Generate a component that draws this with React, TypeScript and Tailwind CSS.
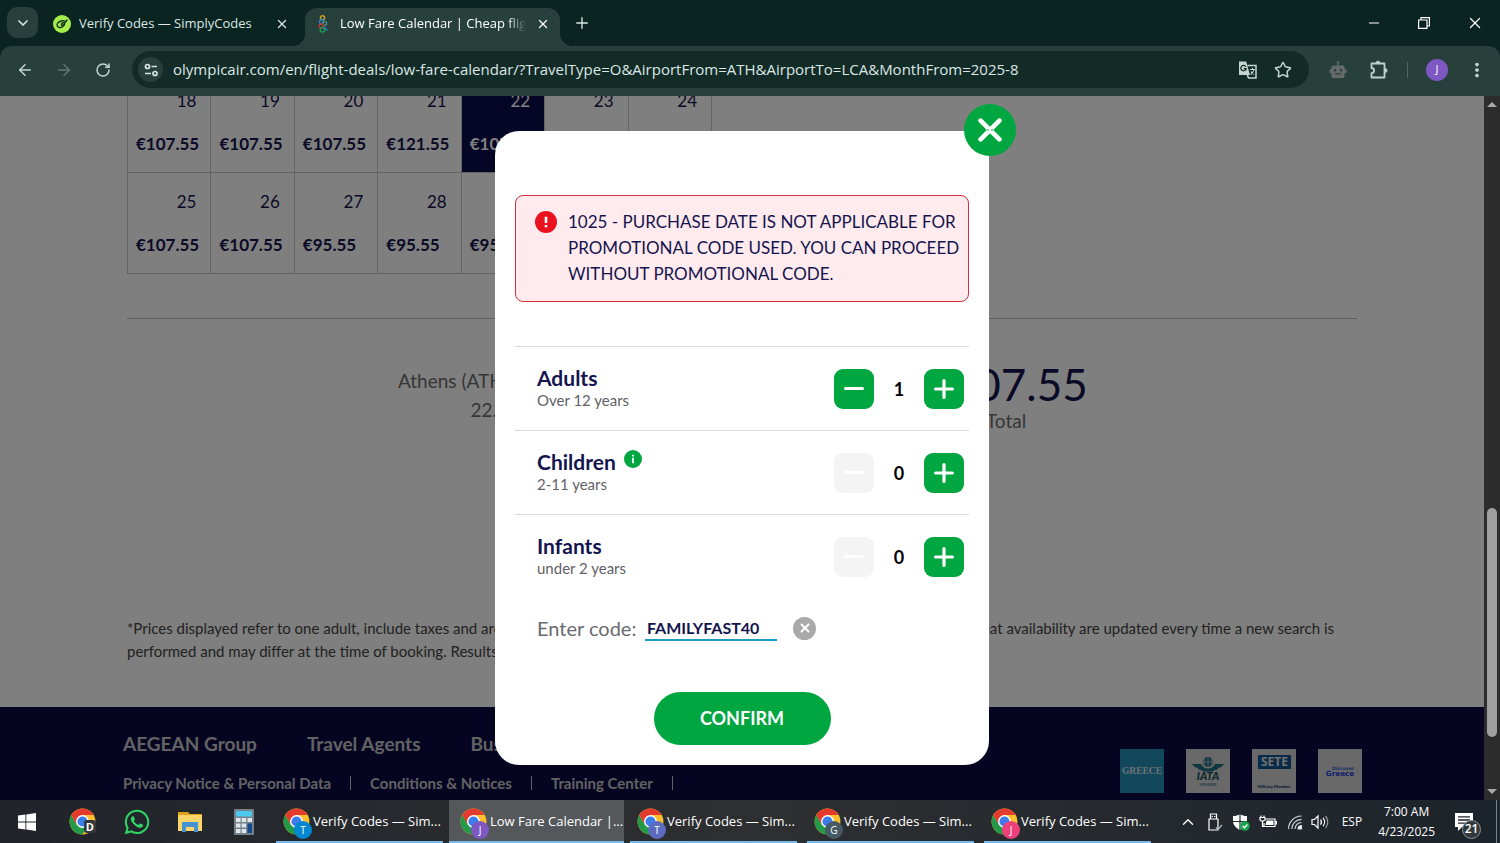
import React, { useState } from "react";
import {
  ArrowLeft,
  ArrowRight,
  ChevronDown,
  ChevronUp,
  Minus,
  Plus,
  RotateCw,
  Star,
  X,
} from "lucide-react";
import { FaWhatsapp } from "react-icons/fa";
import { MdMoreVert } from "react-icons/md";

const ui = "font-['Open_Sans','Noto_Sans',sans-serif]";
const site = "font-['Lato','Open_Sans',sans-serif]";

function SimplyCodesIcon() {
  return (
    <svg viewBox="0 0 18 18" className="size-[18px] shrink-0" aria-hidden="true">
      <circle cx="9" cy="9" r="9" fill="#a5ee4b" />
      <path
        d="M12 6.200C8.500 5 4.200 7 4 9.800c-.1 2.800 3.600 3.500 5.800 1.700 2.200-1.700 2.400-3.600 1-3.900-1.500-.2-3 1.300-2.300 2.300.7.700 2 .1 2.900-1.200L14 5"
        fill="none"
        stroke="#173321"
        strokeWidth="1.400"
        strokeLinecap="round"
      />
    </svg>
  );
}

function OlympicIcon() {
  return (
    <svg viewBox="0 0 14 18" className="h-[18px] w-[14px] shrink-0" fill="none" strokeWidth="1.400" aria-hidden="true">
      <circle cx="6.500" cy="2.800" r="2.100" stroke="#c9a227" />
      <circle cx="5.500" cy="6.800" r="2.100" stroke="#2b7fc4" />
      <circle cx="8.500" cy="8.500" r="2.100" stroke="#4a8f8a" />
      <circle cx="5.500" cy="11" r="2.100" stroke="#c0392b" />
      <circle cx="6.500" cy="14.800" r="2.300" stroke="#1f9d55" />
      <path d="M8.500 12.500 11.500 15.500" stroke="#2b7fc4" />
    </svg>
  );
}

function TuneIcon() {
  return (
    <svg viewBox="0 0 16 16" className="size-4" fill="none" stroke="#d5e3df" strokeWidth="1.700" aria-hidden="true">
      <circle cx="4.500" cy="4.500" r="2" />
      <path d="M8.500 4.500H14M2 11.500h6" />
      <circle cx="12" cy="11.500" r="2" />
    </svg>
  );
}

function TranslateIcon() {
  return (
    <svg viewBox="0 0 20 20" className="size-5" fill="none" aria-hidden="true">
      <path d="M9.500 5.500H18V18h-7.500L9 14" stroke="#c5d6d1" strokeWidth="1.500" />
      <path d="M1 1.500h7.200L12 15H1z" fill="#c5d6d1" />
      <path d="M7.800 6.600A2.700 2.700 0 1 0 8.200 8.600H5.800" stroke="#122b27" strokeWidth="1.300" />
      <path d="M12 9.500h5M14.500 8v1.500M16 9.500c-.6 2.600-2 4.200-3.300 5M13.200 11.500c.8 1.500 1.800 2.500 3 3" stroke="#c5d6d1" strokeWidth="1.100" />
    </svg>
  );
}

function RobotIcon() {
  return (
    <svg viewBox="0 0 20 20" className="size-5" fill="#636a68" aria-hidden="true">
      <path d="M9.400 2.500h1.200V6H9.400z" />
      <circle cx="10" cy="2.500" r="1.200" />
      <path
        fillRule="evenodd"
        d="M5 5.500h10a1.500 1.500 0 0 1 1.500 1.500v2a2.200 2.200 0 0 1 0 4.600V17a1 1 0 0 1-1 1h-11a1 1 0 0 1-1-1v-3.400a2.200 2.200 0 0 1 0-4.600V7A1.500 1.500 0 0 1 5 5.500zM7 9a1.200 1.200 0 1 0 0 2.400A1.200 1.200 0 0 0 7 9zm6 0a1.200 1.200 0 1 0 0 2.400A1.200 1.200 0 0 0 13 9zM7 13.300v1.200h6v-1.200z"
      />
    </svg>
  );
}

function PuzzleIcon() {
  return (
    <svg viewBox="0 0 20 20" className="size-5" fill="none" aria-hidden="true">
      <path
        d="M2.500 3.500h13v14h-13v-4.300a2.600 2.600 0 0 0 0-5.200z"
        stroke="#b9d3cc"
        strokeWidth="1.800"
        strokeLinejoin="round"
      />
      <path d="M7 3.200a2 2 0 0 1 4 0zM16 8.500a2 2 0 0 1 0 4z" fill="#b9d3cc" stroke="#b9d3cc" />
    </svg>
  );
}

function RestoreIcon() {
  return (
    <svg viewBox="0 0 12 12" className="size-3" fill="none" stroke="#fff" strokeWidth="1.200" aria-hidden="true">
      <path d="M.6 3h8.400v8.400H.6zM3 3V.6h8.400V9H9" />
    </svg>
  );
}

function ChromeIcon() {
  return (
    <svg viewBox="0 0 48 48" className="size-[27px]" aria-hidden="true">
      <circle cx="24" cy="24" r="23" fill="#fbc02d" />
      <path d="M4.100 12.500A23 23 0 0 0 24 47l10-17.300L24 24 14 29.700z" fill="#229a48" />
      <path d="M4.100 12.500A23 23 0 0 1 43.900 12.500H24L14 29.700z" fill="#e33b2e" />
      <circle cx="24" cy="24" r="11.500" fill="#fff" />
      <circle cx="24" cy="24" r="9" fill="#3b7ded" />
    </svg>
  );
}

function WindowsIcon() {
  return (
    <svg viewBox="0 0 18 18" className="size-[18px]" fill="#fff" aria-hidden="true">
      <path d="M0 2.600 7.400 1.600V8.500H0zM8.300 1.500 18 0v8.500H8.300zM0 9.400h7.400v7L0 15.400zM8.300 9.400H18V18l-9.700-1.400z" />
    </svg>
  );
}

function FolderIcon() {
  return (
    <svg viewBox="0 0 26 22" className="h-[22px] w-[26px]" aria-hidden="true">
      <path d="M1 1h10l2 2h12v4H1z" fill="#e0a21b" />
      <path d="M1 4h24v16H1z" fill="#fbd56c" />
      <path d="M5 11h16v10h-4v-5H9v5H5z" fill="#4593d3" />
    </svg>
  );
}

function CalculatorIcon() {
  return (
    <svg viewBox="0 0 20 26" className="h-[26px] w-5" aria-hidden="true">
      <rect width="20" height="26" rx="1" fill="#75808b" />
      <rect x="2" y="2" width="16" height="5.500" fill="#4cc7ee" />
      <path d="M2 9h4.500v4H2zM7.700 9h4.500v4H7.700zM13.500 9H18v4h-4.500zM2 14.500h4.500v4H2zM7.700 14.500h4.500v4H7.700zM2 20h4.500v4H2zM7.700 20h4.500v4H7.700z" fill="#dfe6ec" />
      <path d="M13.500 14.500H18V24h-4.500z" fill="#14498c" />
    </svg>
  );
}

function UsbIcon() {
  return (
    <svg viewBox="0 0 16 18" className="h-[18px] w-4" fill="none" stroke="#fff" strokeWidth="1.200" aria-hidden="true">
      <path d="M3.500 6V1h6v5M2 6h9v11H2zM5.300 3v1M7.700 3v1" />
      <path d="M9 14.500l2 2 4-4.500" stroke="#b8bec2" />
    </svg>
  );
}

function ShieldIcon() {
  return (
    <svg viewBox="0 0 18 18" className="size-[18px]" aria-hidden="true">
      <path d="M8 1c2 1.500 4.500 2 7 2v5c0 4-3 7-7 9-4-2-7-5-7-9V3c2.500 0 5-.5 7-2z" fill="#fff" />
      <path d="M8 1v16M1 8.500h14" stroke="#20262b" strokeWidth="1.200" />
      <circle cx="13" cy="13" r="4.800" fill="#17a34a" />
      <path d="m10.700 13 1.700 1.700 3-3.200" fill="none" stroke="#fff" strokeWidth="1.300" />
    </svg>
  );
}

function BatteryIcon() {
  return (
    <svg viewBox="0 0 18 14" className="h-3.5 w-[18px]" fill="none" stroke="#fff" strokeWidth="1.200" aria-hidden="true">
      <path d="M6.500 4H16v7.500H5V8M16 6.500h1.400V9H16" />
      <path d="M7.500 5.500H14.500v4.500h-8z" fill="#fff" stroke="none" />
      <path d="M1 2.500h5V5L3.500 6.500 1 5zM2 .5v2M5 .5v2M3.500 6v5.500H5" />
    </svg>
  );
}

function WifiIcon() {
  return (
    <svg viewBox="0 0 16 16" className="size-4" fill="none" stroke="#cfd4d7" strokeWidth="1.200" aria-hidden="true">
      <path d="M1.500 15A13 13 0 0 1 14.500 2M4.800 15a9.700 9.700 0 0 1 9.700-9.700M8 15a6.500 6.500 0 0 1 6.500-6.500" />
      <path d="M11 15a3.500 3.500 0 0 1 3.500-3.500V15z" fill="#fff" />
    </svg>
  );
}

function SpeakerIcon() {
  return (
    <svg viewBox="0 0 18 16" className="h-4 w-[18px]" fill="none" stroke="#fff" strokeWidth="1.200" aria-hidden="true">
      <path d="M1 5.500h2.500L7 2v12l-3.500-3.500H1z" />
      <path d="M9.500 5.500a4 4 0 0 1 0 5M12 3.800a6.500 6.500 0 0 1 0 8.400" />
      <path d="M14.500 2a9 9 0 0 1 0 12" stroke="#99a0a4" />
    </svg>
  );
}

function NotificationIcon() {
  return (
    <svg viewBox="0 0 18 18" className="size-[18px]" aria-hidden="true">
      <path d="M0 0h18v14H7l-4 4v-4H0z" fill="#fff" />
      <path d="M3 3.800h12M3 7h12M3 10.200h8" stroke="#20262b" strokeWidth="1.300" />
    </svg>
  );
}

function TabStrip() {
  return (
    <div className="flex h-[46px] items-end bg-[#0a2421] pl-[7px] text-[#dce7e4]">
      <button aria-label="Search tabs" className="mb-2 flex size-[31px] items-center justify-center rounded-[10px] bg-[#28403b]">
        <ChevronDown className="size-4" strokeWidth={2.5} />
      </button>
      <div className="flex h-[38px] w-[267px] items-center pb-[7px] pl-[15px]">
        <SimplyCodesIcon />
        <span className="ml-2 flex-1 truncate text-[13px]">Verify Codes — SimplyCodes</span>
        <button aria-label="Close tab" className="mr-4">
          <X className="size-3.5" strokeWidth={2.2} />
        </button>
      </div>
      <div className="relative flex h-[38px] w-[255px] items-center rounded-t-xl bg-[#28403b] pb-[7px] pl-[11px]">
        <span className="absolute bottom-0 -left-3 size-3 bg-[radial-gradient(circle_at_0_0,transparent_12px,#28403b_12px)]" />
        <span className="absolute -right-3 bottom-0 size-3 bg-[radial-gradient(circle_at_100%_0,transparent_12px,#28403b_12px)]" />
        <OlympicIcon />
        <span className="ml-2.5 w-[186px] overflow-hidden text-[13px] whitespace-nowrap text-white [mask-image:linear-gradient(to_right,#000_90%,transparent)]">
          Low Fare Calendar | Cheap flights
        </span>
        <button aria-label="Close tab" className="ml-2.5">
          <X className="size-3.5 text-white" strokeWidth={2.2} />
        </button>
      </div>
      <button aria-label="New tab" className="mb-3.5 ml-[13px]">
        <Plus className="size-[18px]" strokeWidth={1.8} />
      </button>
      <div className="mb-3.5 ml-auto flex items-center gap-9 pr-4 text-white">
        <button aria-label="Minimize">
          <Minus className="size-4" strokeWidth={1.5} />
        </button>
        <button aria-label="Restore">
          <RestoreIcon />
        </button>
        <button aria-label="Close window" className="flex size-[18px] items-center justify-center">
          <X className="size-[18px]" strokeWidth={1.7} />
        </button>
      </div>
    </div>
  );
}

function Toolbar() {
  return (
    <div className="bg-[#0a2421]">
      <div className="flex h-[50px] items-center rounded-t-xl bg-[#28403b] px-4 pb-[3px] text-[#c5d6d1]">
        <button aria-label="Back">
          <ArrowLeft className="size-[18px]" strokeWidth={2} />
        </button>
        <button aria-label="Forward" className="ml-[21px] text-[#607872]">
          <ArrowRight className="size-[18px]" strokeWidth={2} />
        </button>
        <button aria-label="Reload" className="ml-[22px]">
          <RotateCw className="size-4" strokeWidth={2.2} />
        </button>
        <div className="ml-[21px] flex h-[37px] flex-1 items-center rounded-full bg-[#122b27] pr-[17px] pl-1.5">
          <button aria-label="Site information" className="flex size-[25px] items-center justify-center rounded-full bg-[#28403b]">
            <TuneIcon />
          </button>
          <input
            aria-label="Address"
            className="ml-2.5 min-w-0 flex-1 bg-transparent text-[15px] text-[#dce7e4] outline-none"
            defaultValue="olympicair.com/en/flight-deals/low-fare-calendar/?TravelType=O&AirportFrom=ATH&AirportTo=LCA&MonthFrom=2025-8"
          />
          <button aria-label="Translate this page">
            <TranslateIcon />
          </button>
          <button aria-label="Bookmark this page" className="ml-4">
            <Star className="size-[18px]" strokeWidth={2} />
          </button>
        </div>
        <button aria-label="Bot extension" className="ml-[19px]">
          <RobotIcon />
        </button>
        <button aria-label="Extensions" className="ml-[21px]">
          <PuzzleIcon />
        </button>
        <span className="ml-[18px] h-4 w-px bg-[#4c6660]" />
        <button aria-label="Profile" className="ml-[18px] flex size-[22px] items-center justify-center rounded-full bg-[#7e57c2] text-[11px] text-white">
          J
        </button>
        <button aria-label="Menu" className="-mr-1 ml-[18px]">
          <MdMoreVert className="size-[22px]" />
        </button>
      </div>
    </div>
  );
}

const weeks: [number, string][][] = [
  [
    [18, "€107.55"],
    [19, "€107.55"],
    [20, "€107.55"],
    [21, "€121.55"],
    [22, "€107.55"],
    [23, ""],
    [24, ""],
  ],
  [
    [25, "€107.55"],
    [26, "€107.55"],
    [27, "€95.55"],
    [28, "€95.55"],
    [29, "€95.55"],
  ],
];

function FareCalendar() {
  return (
    <table className="-mt-[25px] w-[585px] table-fixed border-collapse text-[#14144f]">
      <tbody>
        {weeks.map((week, i) => (
          <tr key={i} className="h-[101px]">
            {week.map(([day, price]) => (
              <td
                key={day}
                className={
                  day === 22
                    ? "border border-[#c8c8c8] bg-[#0a0a4c] p-0 align-top text-white"
                    : "border border-[#c8c8c8] p-0 align-top"
                }
              >
                <div className="flex flex-col gap-[19px] pt-[17px]">
                  <span className="pr-3.5 text-right text-[17px] leading-6">{day}</span>
                  <span className="pl-2 text-[17px] leading-6 font-bold">{price}</span>
                </div>
              </td>
            ))}
          </tr>
        ))}
      </tbody>
    </table>
  );
}

function PartnerLogos() {
  return (
    <div className="flex gap-[22px]">
      <svg viewBox="0 0 44 44" className="size-11" role="img" aria-label="Greece">
        <rect width="44" height="44" fill="#2490b8" />
        <text x="22" y="25" textAnchor="middle" fontFamily="Liberation Serif" fontWeight="700" fontSize="9.500" fill="#d8e4ea">GREECE</text>
      </svg>
      <svg viewBox="0 0 44 44" className="size-11" role="img" aria-label="IATA member">
        <rect width="44" height="44" fill="#d2d2d2" />
        <circle cx="22" cy="13" r="5" fill="#1e6f82" />
        <path d="M17 13h10M22 8v10M19 9.500c-1 2-1 5 0 7M25 9.500c1 2 1 5 0 7" stroke="#d2d2d2" strokeWidth=".7" fill="none" />
        <path d="M5.500 15H15c1.500 3 4 4.500 7 4.500s5.500-1.500 7-4.500h9.500l-4 3.500h-1.500l-2.500 2.500h-1.500L27 22.500H17L15 21h-1.500L11 18.500H9.500z" fill="#1e6f82" />
        <text x="22" y="31" textAnchor="middle" fontFamily="Lato" fontStyle="italic" fontWeight="900" fontSize="11" fill="#17505f">IATA</text>
        <text x="22" y="37" textAnchor="middle" fontFamily="Lato" fontWeight="700" fontSize="4" fill="#3c8998">MEMBER</text>
      </svg>
      <svg viewBox="0 0 44 44" className="size-11" role="img" aria-label="SETE Military Member">
        <rect width="44" height="44" fill="#d2d2d2" />
        <rect x="6" y="6" width="33" height="14" fill="#0f5791" />
        <text x="22.500" y="17" textAnchor="middle" fontFamily="Noto Sans" fontWeight="700" fontSize="12" fill="#e2e2e2">SETE</text>
        <text x="22" y="39" textAnchor="middle" fontFamily="Lato" fontWeight="900" fontSize="4.400" fill="#12406e">Military Member</text>
      </svg>
      <svg viewBox="0 0 44 44" className="size-11" role="img" aria-label="Discover Greece">
        <rect width="44" height="44" fill="#d2d2d2" />
        <text x="25" y="21" textAnchor="middle" fontFamily="DejaVu Sans" fontWeight="700" fontSize="4.500" fill="#2b5fd4">Discover</text>
        <text x="22" y="27" textAnchor="middle" fontFamily="DejaVu Sans" fontWeight="700" fontSize="7.200" fill="#1f45e0">Greece</text>
      </svg>
    </div>
  );
}

function FarePage() {
  return (
    <div className="flex h-full flex-col justify-between">
      <div className="mx-auto w-full max-w-[1230px]">
        <FareCalendar />
        <div className="mt-11 flex border-t border-[#c0c0c0] pt-11 text-[19px] text-[#6c6c6c]">
          <div className="w-[784px] pt-[3px] text-center leading-[29px]">
            <p>Athens (ATH) - Larnaca (LCA)</p>
            <p>22.08.2025</p>
          </div>
          <div className="w-[190px] text-center">
            <p className="text-[44px] leading-[42px] text-[#14144f]">€107.55</p>
            <p className="mt-1 leading-6">Total</p>
          </div>
        </div>
      </div>
      <div>
        <div className="mx-auto mb-11 w-full max-w-[1230px] pr-[23px] text-[15px] leading-[23px] text-[#444]">
          <p className="flex justify-between">
            <span>*Prices displayed refer to one adult, include taxes and are</span>
            <span>Seat availability are updated every time a new search is</span>
          </p>
          <p>performed and may differ at the time of booking. Results</p>
        </div>
        <footer className="flex h-[93px] justify-between bg-[#0a0a44] pt-[25px] pr-[122px] pl-[123px] font-bold text-[#c4c4c4]">
          <div>
            <nav className="flex gap-[50px] text-[19px] leading-6">
              <a href="#group">AEGEAN Group</a>
              <a href="#agents">Travel Agents</a>
              <a href="#business">Business</a>
            </nav>
            <nav className="mt-[15px] flex items-center gap-[19px] text-[15px] leading-6">
              <a href="#privacy">Privacy Notice &amp; Personal Data</a>
              <span className="h-3.5 w-px bg-[#c4c4c4]" />
              <a href="#conditions">Conditions &amp; Notices</a>
              <span className="h-3.5 w-px bg-[#c4c4c4]" />
              <a href="#training">Training Center</a>
              <span className="h-3.5 w-px bg-[#c4c4c4]" />
            </nav>
          </div>
          <div className="mt-[17px]">
            <PartnerLogos />
          </div>
        </footer>
      </div>
    </div>
  );
}

function Stepper({ label, note, min, start, info }: { label: string; note: string; min: number; start: number; info?: boolean }) {
  const [count, setCount] = useState(start);
  const disabled = min === 0 && count === 0;
  return (
    <div className="flex h-[84px] items-center justify-between border-t border-[#d9d9d9] pr-[5px] pl-[22px]">
      <div className="pb-0.5">
        <div className="flex text-[21px] leading-6 font-bold text-[#14144f]">
          {label}
          {info && (
            <button aria-label="About children" className="ml-2 flex size-[18px] items-center justify-center rounded-full bg-[#00a63f]">
              <svg viewBox="0 0 18 18" className="size-[18px]" aria-hidden="true">
                <path d="M9 4.700v1.700M9 7.700v5.500" stroke="#fff" strokeWidth="1.800" />
              </svg>
            </button>
          )}
        </div>
        <div className="text-[15px] leading-5 text-[#5f5f66]">{note}</div>
      </div>
      <div className="flex items-center">
        <button
          aria-label={"Remove " + label}
          disabled={disabled}
          onClick={() => setCount(Math.max(min, count - 1))}
          className="flex size-10 items-center justify-center rounded-[9px] bg-[#00a63f] disabled:bg-[#f4f4f4]"
        >
          <span className="h-[3px] w-5 rounded-full bg-white" />
        </button>
        <output className="w-[50px] text-center text-lg font-bold text-black">{count}</output>
        <button
          aria-label={"Add " + label}
          onClick={() => setCount(count + 1)}
          className="flex size-10 items-center justify-center rounded-[9px] bg-[#00a63f] text-white"
        >
          <svg viewBox="0 0 20 20" className="size-5" stroke="currentColor" strokeWidth="3.200" strokeLinecap="round" aria-hidden="true">
            <path d="M10 1.600v16.800M1.600 10h16.800" />
          </svg>
        </button>
      </div>
    </div>
  );
}

function PassengerDialog() {
  return (
    <div role="dialog" aria-label="Passengers" className="relative w-[494px] rounded-[24px] bg-white px-5 pt-16 pb-5">
      <button aria-label="Close dialog" className="absolute -top-[27px] -right-[27px] flex size-[52px] items-center justify-center rounded-full bg-[#00a63f]">
        <svg viewBox="0 0 24 24" className="size-6" stroke="#fff" strokeWidth="4.600" strokeLinecap="round" aria-hidden="true">
          <path d="m2.600 2.600 18.800 18.800M21.400 2.600 2.600 21.400" />
          <path d="M9.500 12h1M13.500 12h1" stroke="#00a63f" strokeWidth="1" />
        </svg>
      </button>
      <div role="alert" className="flex rounded-lg border border-[#d2303c] bg-[#ffebed] pt-[13px] pr-2 pb-3.5 pl-[19px]">
        <svg viewBox="0 0 22 22" className="mt-0.5 size-[22px] shrink-0" aria-hidden="true">
          <circle cx="11" cy="11" r="11" fill="#eb1220" />
          <path d="M11 5.800v6.200M11 14v2.200" stroke="#fff" strokeWidth="2.600" />
        </svg>
        <p className="ml-[11px] text-[17px] leading-[26px] whitespace-nowrap text-[#14144f]">
          1025 - PURCHASE DATE IS NOT APPLICABLE FOR
          <br />
          PROMOTIONAL CODE USED. YOU CAN PROCEED
          <br />
          WITHOUT PROMOTIONAL CODE.
        </p>
      </div>
      <div className="mt-11">
        <Stepper label="Adults" note="Over 12 years" min={1} start={1} />
        <Stepper label="Children" note="2-11 years" min={0} start={0} info />
        <Stepper label="Infants" note="under 2 years" min={0} start={0} />
      </div>
      <div className="mt-[18px] flex h-6 items-center pl-[22px]">
        <label htmlFor="promo" className="w-[108px] text-[20px] text-[#6a6a70]">
          Enter code:
        </label>
        <input
          id="promo"
          defaultValue="FAMILYFAST40"
          className="h-[26px] w-[132px] border-b-2 border-[#1a9fc9] px-0.5 text-base font-bold text-[#14144f] outline-none"
        />
        <button aria-label="Clear code" className="ml-4 flex size-[23px] items-center justify-center rounded-full bg-[#a9a9a9] text-white">
          <X className="size-3.5" strokeWidth={3.5} />
        </button>
      </div>
      <div className="mt-[52px] flex justify-center">
        <button className="h-[53px] w-[177px] rounded-full bg-[#00a63f] pb-0.5 text-lg font-bold text-white">CONFIRM</button>
      </div>
    </div>
  );
}

function Scrollbar() {
  return (
    <div className="flex w-4 shrink-0 flex-col items-center bg-[#2c2c2c] py-1.5" aria-hidden="true">
      <span className="border-x-[5px] border-b-[5px] border-x-transparent border-b-[#a6a6a6]" />
      <span className="flex-[401]" />
      <span className="w-2.5 flex-[229] rounded-full bg-[#9f9f9f]" />
      <span className="flex-[52]" />
      <span className="border-x-[5px] border-t-[5px] border-x-transparent border-t-[#a6a6a6]" />
    </div>
  );
}

const windows = [
  { title: "Verify Codes — Sim...", letter: "T", badge: "bg-[#0288d1]" },
  { title: "Low Fare Calendar |...", letter: "J", badge: "bg-[#7e57c2]", active: true },
  { title: "Verify Codes — Sim...", letter: "T", badge: "bg-[#5c6bc0]" },
  { title: "Verify Codes — Sim...", letter: "G", badge: "bg-[#455a64]" },
  { title: "Verify Codes — Sim...", letter: "J", badge: "bg-[#ec407a]" },
];

function Taskbar() {
  return (
    <div className="flex h-[43px] items-stretch bg-linear-to-r from-[#20242a] via-[#2e2f31] to-[#1c242b] text-white">
      <div className="flex items-center pl-[18px]">
        <button aria-label="Start"><WindowsIcon /></button>
        <button aria-label="Chrome" className="relative ml-[33px]">
          <ChromeIcon />
          <span className="absolute right-0 bottom-0.5 rounded-[3px] bg-[#33383c] px-0.5 text-[11px] leading-[13px] font-bold">D</span>
        </button>
        <button aria-label="WhatsApp" className="ml-[27px]"><FaWhatsapp className="size-7 text-[#2fd566]" /></button>
        <button aria-label="File Explorer" className="ml-[26px]"><FolderIcon /></button>
        <button aria-label="Calculator" className="ml-[31px]"><CalculatorIcon /></button>
      </div>
      <div className="ml-[22px] flex gap-2.5">
        {windows.map((w, i) => (
          <button
            key={i}
            className={
              w.active
                ? "-mx-1 flex w-[175px] items-center border-b-2 border-[#76b9ed] bg-[#55585b] pt-0.5 pl-[11px]"
                : "flex w-[167px] items-center border-b-2 border-[#76b9ed] pt-0.5 pl-[7px]"
            }
          >
            <span className="relative shrink-0">
              <ChromeIcon />
              <span className={`absolute -right-0.5 -bottom-1 flex size-[18px] items-center justify-center rounded-full text-[10px] ${w.badge}`}>
                {w.letter}
              </span>
            </span>
            <span className="ml-[3px] text-[13px] whitespace-nowrap">{w.title}</span>
          </button>
        ))}
      </div>
      <div className="ml-auto flex items-center border-r border-[#7b8185] pr-[23px]">
        <button aria-label="Show hidden icons"><ChevronUp className="size-[18px]" strokeWidth={1.8} /></button>
        <span className="ml-2.5"><UsbIcon /></span>
        <span className="ml-[9px]"><ShieldIcon /></span>
        <span className="ml-[9px]"><BatteryIcon /></span>
        <span className="ml-2.5"><WifiIcon /></span>
        <span className="ml-2"><SpeakerIcon /></span>
        <span className="ml-[13px] text-xs">ESP</span>
        <div className="ml-4 text-center text-xs leading-5">
          <div>7:00 AM</div>
          <div>4/23/2025</div>
        </div>
        <button aria-label="Notifications" className="relative ml-5">
          <NotificationIcon />
          <span className="absolute -right-2 -bottom-2 flex size-[19px] items-center justify-center rounded-full border border-[#8b9094] bg-[#33383d] text-xs font-semibold">
            21
          </span>
        </button>
      </div>
      <span className="w-[3px]" />
    </div>
  );
}

export default function App() {
  return (
    <div className={`flex h-screen flex-col overflow-hidden ${ui}`}>
      <TabStrip />
      <Toolbar />
      <div className="flex min-h-0 flex-1">
        <main className={`relative min-w-0 flex-1 overflow-hidden bg-white ${site}`}>
          <FarePage />
          <div className="absolute inset-0 flex items-center justify-center bg-black/50">
            <PassengerDialog />
          </div>
        </main>
        <Scrollbar />
      </div>
      <Taskbar />
    </div>
  );
}
